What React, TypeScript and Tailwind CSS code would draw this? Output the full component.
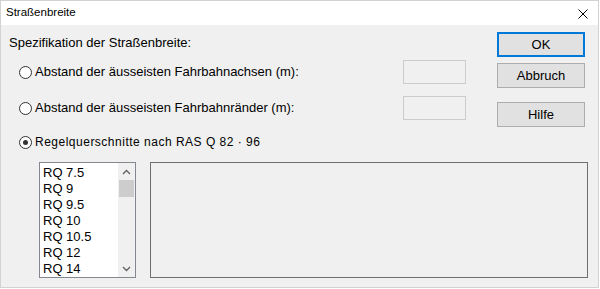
import React from 'react';

const ITEMS = ['RQ 7.5', 'RQ 9', 'RQ 9.5', 'RQ 10', 'RQ 10.5', 'RQ 12', 'RQ 14'];

function Radio({ checked }: { checked?: boolean }) {
  return (
    <span className="w-[13px] h-[13px] rounded-full border border-[#333333] bg-white flex items-center justify-center shrink-0">
      {checked && <span className="w-[5px] h-[5px] rounded-full bg-[#333333]" />}
    </span>
  );
}

function Button({ label, primary }: { label: string; primary?: boolean }) {
  return (
    <button
      className={`w-[88px] h-[25px] bg-[#e1e1e1] text-[13px] text-black flex items-center justify-center ${
        primary ? 'border-2 border-[#0078d7]' : 'border border-[#adadad]'
      }`}
    >
      {label}
    </button>
  );
}

function Chevron({ up }: { up?: boolean }) {
  return (
    <svg width="9" height="6" viewBox="0 0 9 6" className="block">
      <path d={up ? 'M1 5 L4.5 1.5 L8 5' : 'M1 1 L4.5 4.5 L8 1'} fill="none" stroke="#606060" strokeWidth="1.3" />
    </svg>
  );
}

export default function App() {
  return (
    <div className="w-[600px] h-[289px] bg-white font-['Liberation_Sans',Arial,sans-serif]">
      <div className="w-[599px] h-[288px] border border-[#d2d2d2] flex flex-col">
        {/* Title bar */}
        <div className="h-[24px] bg-white flex items-center pl-[5px] pr-[10px] shrink-0">
          <span className="text-[11.5px] text-black">Straßenbreite</span>
          <svg width="10" height="10" viewBox="0 0 10 10" className="ml-auto mt-[2px]">
            <path d="M0.5 0.5 L9.5 9.5 M9.5 0.5 L0.5 9.5" stroke="#000" strokeWidth="1" />
          </svg>
        </div>

        {/* Body */}
        <div className="flex-1 bg-[#f0f0f0] flex flex-col text-black">
          <div className="flex">
            <div className="flex-1">
              <div className="pl-[8px] pt-[10px] text-[13px] leading-[16px]">Spezifikation der Straßenbreite:</div>
              <div className="pl-[18px] mt-[9px] w-[465px] flex items-center h-[24px] gap-[3px]">
                <Radio />
                <span className="text-[13px]">Abstand der äusseisten Fahrbahnachsen (m):</span>
                <span className="ml-auto w-[63px] h-[24px] border border-[#cccccc] bg-[#f0f0f0]" />
              </div>
              <div className="pl-[18px] mt-[12px] w-[465px] flex items-center h-[24px] gap-[3px]">
                <Radio />
                <span className="text-[13px]">Abstand der äusseisten Fahrbahnränder (m):</span>
                <span className="ml-auto w-[63px] h-[24px] border border-[#cccccc] bg-[#f0f0f0]" />
              </div>
              <div className="pl-[18px] mt-[14px] flex items-center h-[16px] gap-[3px]">
                <Radio checked />
                <span className="text-[12px] tracking-[0.5px]">Regelquerschnitte nach RAS Q 82 · 96</span>
              </div>
            </div>
            <div className="w-[88px] mr-[13px] pt-[7px] flex flex-col">
              <Button label="OK" primary />
              <div className="mt-[6px]"><Button label="Abbruch" /></div>
              <div className="mt-[14px]"><Button label="Hilfe" /></div>
            </div>
          </div>

          {/* Bottom row */}
          <div className="flex mt-[12px] pl-[38px]">
            <div className="w-[97px] h-[116px] border border-[#828790] bg-white flex">
              <div className="flex-1 pt-[2px] pl-[3px] text-[13px] leading-[16px]">
                {ITEMS.map(i => (
                  <div key={i} className="h-[16px]">{i}</div>
                ))}
              </div>
              <div className="w-[17px] bg-[#f0f0f0] flex flex-col items-center">
                <div className="h-[17px] flex items-center justify-center"><Chevron up /></div>
                <div className="w-[15px] h-[17px] bg-[#cdcdcd]" />
                <div className="flex-1" />
                <div className="h-[17px] flex items-center justify-center"><Chevron /></div>
              </div>
            </div>
            <div className="ml-[14px] w-[438px] h-[116px] border border-[#6e6e6e]" />
          </div>
        </div>
      </div>
    </div>
  );
}
